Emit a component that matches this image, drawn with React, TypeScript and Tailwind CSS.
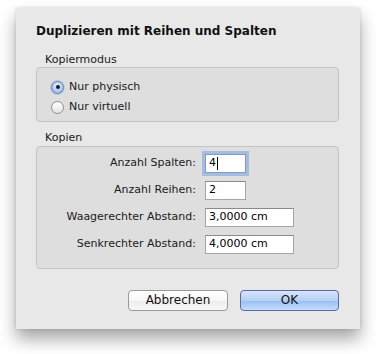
import React from "react";

const font = { fontFamily: '"DejaVu Sans", "Lucida Grande", Verdana, sans-serif' };

function Radio({ checked, label }: { checked?: boolean; label: string }) {
  return (
    <div className="flex items-center h-[20px]">
      <span
        className={`w-[13px] h-[13px] rounded-full border flex items-center justify-center ${
          checked
            ? "border-[#5b7fb8] bg-[radial-gradient(circle_at_50%_35%,#eaf2fd_0%,#a9c8f0_60%,#8fb5ea_100%)] shadow-[0_0_0_1px_rgba(120,160,220,0.35)]"
            : "border-[#8d8d8d] bg-[linear-gradient(to_bottom,#ffffff,#e4e4e4)]"
        }`}
      >
        {checked && <span className="w-[4px] h-[4px] rounded-full bg-[#1a1a1a]" />}
      </span>
      <span className="ml-[5px] text-[11px] text-[#1a1a1a]">{label}</span>
    </div>
  );
}

function Field({ label, value, wide, focus }: { label: string; value: string; wide?: boolean; focus?: boolean }) {
  return (
    <div className="flex items-center h-[19px]">
      <span className="w-[159px] text-right text-[11px] text-[#1a1a1a]">{label}</span>
      <div
        className={`ml-[9px] h-[19px] ${wide ? "w-[89px]" : "w-[41px]"} bg-white border flex items-center pl-[3px] text-[11px] text-black ${
          focus ? "border-[#7d9ccc] shadow-[0_0_0_3px_rgba(120,160,220,0.55)]" : "border-[#a5a5a5] border-t-[#8a8a8a]"
        }`}
      >
        {value}
        {focus && <span className="ml-[1px] w-px h-[13px] bg-black" />}
      </div>
    </div>
  );
}

export default function App() {
  return (
    <div className="w-[376px] h-[354px] bg-white overflow-hidden" style={font}>
      <div className="ml-[16px] mt-[8px] w-[344px] h-[321px] bg-[#e8e8e8] shadow-[0_10px_16px_rgba(0,0,0,0.35),0_0_3px_rgba(0,0,0,0.15)] pt-[15px] pl-[20px]">
        <div className="h-[16px] leading-[16px] text-[12px] font-bold text-[#111]">Duplizieren mit Reihen und Spalten</div>

        <div className="mt-[14px] h-[14px] leading-[14px] pl-[9px] text-[11px] text-[#1a1a1a]">Kopiermodus</div>
        <div className="w-[303px] h-[55px] rounded-[4px] bg-[#dedede] border border-[#c4c4c4] pt-[9px] pl-[14px]">
          <Radio checked label="Nur physisch" />
          <Radio label="Nur virtuell" />
        </div>

        <div className="mt-[9px] h-[15px] leading-[14px] pl-[9px] text-[11px] text-[#1a1a1a]">Kopien</div>
        <div className="w-[303px] h-[123px] rounded-[4px] bg-[#dedede] border border-[#c4c4c4] pt-[7px] flex flex-col gap-[8px]">
          <Field label="Anzahl Spalten:" value="4" focus />
          <Field label="Anzahl Reihen:" value="2" />
          <Field label="Waagerechter Abstand:" value="3,0000 cm" wide />
          <Field label="Senkrechter Abstand:" value="4,0000 cm" wide />
        </div>

        <div className="mt-[21px] w-[303px] flex justify-end gap-[12px]">
          <button className="w-[100px] h-[21px] rounded-[4px] border border-[#9a9a9a] bg-[linear-gradient(to_bottom,#ffffff_0%,#f7f7f7_50%,#ececec_51%,#f8f8f8_100%)] text-[12px] text-[#111] leading-[19px]">
            Abbrechen
          </button>
          <button className="w-[99px] h-[21px] rounded-[4px] border border-[#5a68a8] bg-[linear-gradient(to_bottom,#d8e6fb_0%,#b3cff5_50%,#98bdf1_51%,#c5ddfb_100%)] text-[12px] text-[#111] leading-[19px]">
            OK
          </button>
        </div>
      </div>
    </div>
  );
}
